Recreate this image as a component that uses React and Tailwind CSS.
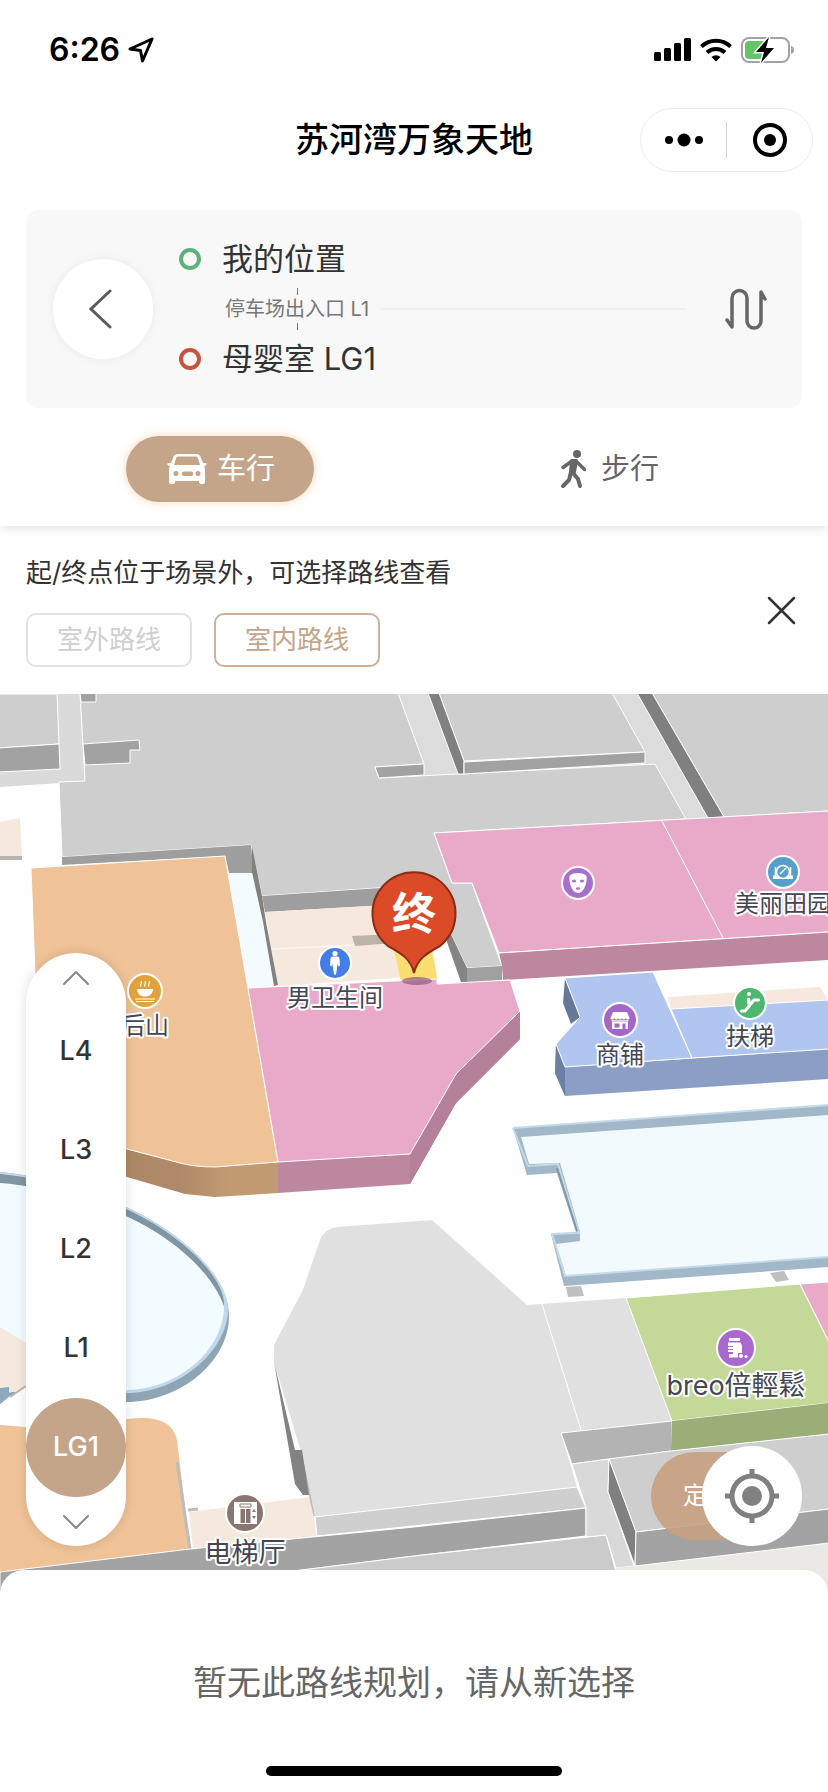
import { useState } from 'react';
import { ChevronUp, ChevronDown } from 'lucide-react';

const FLOORS = ['L4', 'L3', 'L2', 'L1', 'LG1'];

// one entry per place on the map, x / y is the centre of the round icon
const PLACES = [
  { id: 'cafe', name: '后山', x: 145, y: 991, r: 17, color: '#e2a23b', size: 24, labelY: 1034, icon: CafeIcon },
  { id: 'wc', name: '男卫生间', x: 335, y: 963, r: 16, color: '#437de8', size: 24, labelY: 1006, icon: ManIcon },
  { id: 'mask', name: '', x: 578, y: 883, r: 16, color: '#a86fc8', size: 24, labelY: 0, icon: MaskIcon },
  { id: 'spa', name: '美丽田园', x: 783, y: 872, r: 16, color: '#579fca', size: 24, labelY: 912, icon: MirrorIcon },
  { id: 'shop', name: '商铺', x: 620, y: 1020, r: 17, color: '#a566cc', size: 24, labelY: 1063, icon: ShopIcon },
  { id: 'escalator', name: '扶梯', x: 750, y: 1003, r: 16, color: '#4fb670', size: 24, labelY: 1045, icon: EscalatorIcon },
  { id: 'breo', name: 'breo倍輕鬆', x: 736, y: 1348, r: 19, color: '#a968cc', size: 27, labelY: 1395, icon: JarIcon },
  { id: 'lift', name: '电梯厅', x: 245, y: 1513, r: 19, color: '#8a7670', size: 27, labelY: 1562, icon: LiftIcon },
];

function CafeIcon() {
  return (
    <g fill="none" stroke="white" strokeWidth="1.2">
      <path d="M-8 -2H8C8 3 4 5.500 0 5.500S-8 3 -8 -2Z" fill="white" stroke="none" />
      <path d="M-4 -4.500c-2-2 2-3 0-5.500M0 -4.500c-2-2 2-3 0-5.500M4 -4.500c-2-2 2-3 0-5.500M-10 8H10M-9 10.500H9" />
    </g>
  );
}

function ManIcon() {
  return (
    <g fill="white">
      <circle cy="-9.500" r="2.600" />
      <path d="M-2.500 -6.500h5c1.500 0 1.800 1 2 2.500l.5 6.500-1.500 1-.8-3L2 5 1 11.500h-2L-2 5l-.7-4.500-.8 3-1.500-1 .5-6.500c.2-1.500.5-2.500 2-2.500Z" />
    </g>
  );
}

function MaskIcon() {
  return (
    <g>
      <path d="M-8.500 -7C-6 -11 6 -11 8.500 -7 9.500 -1 6 10 0 10S-9.500 -1 -8.500 -7Z" fill="white" />
      <ellipse cx="-4" cy="-2" rx="2" ry="1.500" fill="#a86fc8" />
      <ellipse cx="4" cy="-2" rx="2" ry="1.500" fill="#a86fc8" />
      <ellipse cy="5.500" rx="2.200" ry="1.200" fill="#a86fc8" />
    </g>
  );
}

function MirrorIcon() {
  return (
    <g fill="none" stroke="white" strokeWidth="1.500">
      <path d="M-7.500 -5V5M7.500 -5V5" />
      <path d="M-10 3.500H10V7H-10Z" fill="white" stroke="none" />
      <circle r="6.500" fill="#579fca" />
      <path d="M-3 2 3 -4" />
    </g>
  );
}

function ShopIcon() {
  return (
    <g>
      <path d="M-7 -8H7l2.500 6c0 2-3 2-3.800 0-.8 2-3 2-3.800 0-.8 2-3 2-3.800 0-.8 2-3 2-3.800 0-.8 2-3.800 2-3.800 0Z" fill="white" />
      <path d="M-8 1.500H8V9H-8Z" fill="white" />
      <path d="M-5.500 3.500H-.5V7.500H-5.500ZM2.500 3.500H5.500V9H2.500Z" fill="#a566cc" />
      <path d="M-8.500 .8H8.500" stroke="white" strokeWidth="1" />
    </g>
  );
}

function EscalatorIcon() {
  return (
    <g fill="none" stroke="white" strokeLinecap="round" strokeLinejoin="round">
      <path d="M-8.500 8H-5L4 -3H8.500" strokeWidth="3" />
      <path d="M-1.500 -3.500 -.5 2" strokeWidth="3.500" />
      <circle cx="-1" cy="-9" r="2" fill="white" stroke="none" />
    </g>
  );
}

function JarIcon() {
  return (
    <g>
      <path d="M-7 -10H4V-7H-7ZM-8 -5.500H4.500l1.500 3V5H2v4.500H-7V6H-3V4H-8Z" fill="white" />
      <path d="M-8 -1.500H-3M-8 1.500H-3" stroke="#a968cc" strokeWidth="1" />
      <circle cx="5" cy="8" r="2" fill="white" />
      <circle cx="10" cy="8.500" r="1.600" fill="white" />
    </g>
  );
}

function LiftIcon() {
  return (
    <g>
      <path d="M-11 -11H12V11H-11Z" fill="white" />
      <path d="M-5 -9H6V-6H-5Z" fill="none" stroke="#8a7670" />
      <path d="M-4.500 -4H0V10H-4.500ZM1 -4H5.500V10H1ZM9 -4l2 3H7ZM9 6 7 3h4Z" fill="#8a7670" />
    </g>
  );
}

function MallMap() {
  return (
    <svg
      className="absolute inset-0 h-full w-full"
      viewBox="0 694 828 900"
      preserveAspectRatio="xMidYMid slice"
      role="img"
      aria-label="LG1"
    >
      <defs>
        <linearGradient id="orangeSide" x1="0" x2="1">
          <stop offset="0.2" stopColor="#a98666" />
          <stop offset="0.6" stopColor="#b08a68" />
          <stop offset="0.8" stopColor="#c09b72" />
        </linearGradient>
      </defs>
      <rect y="694" width="828" height="900" fill="#fefefe" />

      {/* corridors and grey blocks at the top */}
      <g stroke="white" strokeWidth="1">
        <path d="M57 694H80L85 781 60 783 0 787V770L59 766Z" fill="#dadada" stroke="none" />
        <path d="M398 694H828V811L686 819 500 830 379 778Z" fill="#dcdcdc" stroke="none" />
        <path d="M-2 694H57L59 744 -2 748Z" fill="#cecece" />
        <path d="M-2 748 59 744 60 769 -2 772Z" fill="#a2a2a2" />
        <path d="M80 693H398L424 764 375 767 379 778 655 764 686 819 434 833 452 883H472L502 966 467 968 449 930 435 884 262 896 251 845 62 857 59 782 85 781Z" fill="#cecece" />
        <path d="M83 744 139 740 140 750H130V763L85 765Z" fill="#a2a2a2" />
        <path d="M80 693H96V702H81Z" fill="#a2a2a2" />
        <path d="M375 767 424 764V775L379 778Z" fill="#a2a2a2" />
        <path d="M439 693H612L645 752 464 761Z" fill="#cecece" />
        <path d="M428 693H439L464 761V774H458Z" fill="#808080" />
        <path d="M464 762 645 752V763L464 774Z" fill="#a2a2a2" />
        <path d="M652 693H829V811L724 817Z" fill="#cecece" />
        <path d="M637 693H652L724 817 708 818Z" fill="#808080" />
      </g>

      {/* walls and rooms behind the destination */}
      <path d="M0 822 20 818 22 857H0Z" fill="#f5e9de" />
      <path d="M0 856H22V860H0Z" fill="#b9b3b0" />
      <path d="M228 873H253L274 986 248 988Z" fill="#f3fbff" />
      <path d="M62 857 251 845 254 873H229L225 856 62 865Z" fill="#9e9e9e" />
      <path d="M262 896 440 884V902L265 912Z" fill="#9e9e9e" />
      <path d="M265 912 437 902V975L278 986Z" fill="#f5e9de" />
      <path d="M272 949 395 943" stroke="#fff6ea" strokeWidth="1.500" />
      <path d="M352 936 395 934V943L355 946Z" fill="#bdb2a8" />
      <path d="M394 950 431 948 438 980 401 981Z" fill="#fbdd70" />
      <path d="M252 846 262 896 266 922 278 985 274 986 263 922 252 872Z" fill="#82817d" />
      <path d="M430 930 449 932 467 984H438Z" fill="#fefefe" />
      <path d="M449 930 467 968V984L462 985 447 942Z" fill="#848484" />
      <path d="M467 968 502 966V981L467 983Z" fill="#a0a0a0" />

      {/* pink and orange shops */}
      <g stroke="white" strokeWidth="1">
        <path d="M434 833 829 811V932L499 953 472 883H452Z" fill="#e9aac9" />
        <path d="M499 953 829 932V960L503 980 502 966Z" fill="#bd879f" stroke="none" />
        <path d="M499 953 829 932M662 821 723 938" fill="none" />
        <path d="M36 1116 127 1149 180 1163 215 1167 278 1162V1193L215 1197 185 1194 127 1177 36 1150Z" fill="url(#orangeSide)" stroke="none" />
        <path d="M31 868 225 856 248 988 278 1162 215 1167Q195 1167 180 1163L127 1149 36 1116V1000Z" fill="#efc297" />
        <path d="M520 1011V1039L456 1103 410 1184 278 1193V1162L410 1154 456 1074Z" fill="#bd879f" stroke="none" />
        <path d="M456 1074 520 1011V1039L456 1103 410 1184V1154Z" fill="#b5809a" stroke="none" />
        <path d="M248 988 437 979V984L510 980 520 1011 456 1074 410 1154 278 1162Z" fill="#e9aac9" />
      </g>

      {/* blue shops */}
      <path d="M668 997 820 987 828 1000 671 1010Z" fill="#f6e8dc" />
      <path d="M565 978 580 1017 571 1024 563 1003Z" fill="#66799a" />
      <path d="M556 1044 565 1067 829 1049V1079L565 1096 555 1073Z" fill="#8b9ec3" />
      <path d="M556 1044 565 1067V1096L555 1073Z" fill="#6d80a4" />
      <g stroke="white" strokeWidth="1">
        <path d="M565 978 653 972 692 1058 565 1067 556 1044 580 1017Z" fill="#b0c6f0" />
        <path d="M671 1009 829 1000V1049L692 1058Z" fill="#b0c6f0" />
      </g>

      {/* glass roof on the right */}
      <path d="M513 1128 829 1105V1267L564 1286 551 1234 576 1232 557 1173 527 1175Z" fill="#a2b8c8" />
      <path d="M521 1137 829 1115V1257L566 1276 556 1244 580 1241V1232L560 1163 529 1164Z" fill="#f2fafd" />
      <path d="M513 1128 829 1105M513 1128 528 1166 558 1164 579 1233 552 1234 565 1276 829 1257" fill="none" stroke="#c3dae8" strokeWidth="2" />
      <path d="M557 1168 577 1231" stroke="#7f97aa" strokeWidth="2" />
      <path d="M566 1287 581 1286 584 1296 568 1297ZM770 1273 784 1271 789 1280 776 1282Z" fill="#c0bfc0" />

      {/* round glass roof on the left */}
      <path d="M0 1172C50 1177 90 1190 126 1207 190 1237 229 1280 229 1316 229 1362 180 1402 126 1402L20 1395 0 1404Z" fill="#8fa5b5" />
      <path d="M0 1172C50 1177 90 1190 126 1207 190 1237 228 1280 228 1309 228 1350 180 1393 126 1393L20 1388 0 1398Z" fill="#bfd9ea" />
      <path d="M0 1182C50 1186 90 1200 126 1216 180 1240 224 1285 224 1309 222 1350 180 1389 126 1390L20 1385 0 1394Z" fill="#f2fbff" />
      <path d="M0 1174C50 1179 90 1192 126 1209 185 1236 226 1280 224 1306 216 1284 190 1246 126 1216 90 1200 50 1187 0 1183Z" fill="#8195a3" />
      <path d="M0 1327 26 1343V1392H0Z" fill="#f5e9de" />
      <path d="M10 1396 26 1386 40 1410H0V1404Z" fill="#fefefe" />
      <path d="M0 1388 9 1387V1396L0 1404Z" fill="#8ea9bd" />
      <path d="M10 1397 26 1386" stroke="#bbb3ad" strokeWidth="2" />

      {/* bottom left orange shop and the lift hall */}
      <path d="M0 1425 26 1427 126 1419Q135 1418 143 1418 172 1418 177 1440L190 1549 0 1572Z" fill="#efc297" />
      <path d="M189 1512 310 1497 317 1536 193 1549Z" fill="#f5e9de" />
      <path d="M177 1462 190 1549M188 1510 198 1509M300 1450 315 1516" fill="none" stroke="#bcbcbc" strokeWidth="3" />

      {/* grey blocks at the bottom */}
      <g stroke="white" strokeWidth="1">
        <path d="M274 1345 303 1290 320 1240Q324 1229 337 1227L432 1220 527 1305 626 1298 672 1421 561 1433 577 1487 315 1517 304 1462 274 1362Z" fill="#e0e0e0" stroke="none" />
        <path d="M542 1304 581 1430" />
        <path d="M274 1362 295 1450H302L309 1495H303L295 1484Z" fill="#828282" stroke="none" />
        <path d="M315 1517 577 1487 586 1508 317 1536Z" fill="#cfcfcf" />
        <path d="M0 1572 190 1549 414 1527 586 1508V1536L414 1556 270 1574 0 1594Z" fill="#a3a3a3" />
        <path d="M270 1574 414 1556 606 1535 622 1594H200Z" fill="#cbcbcb" />
        <path d="M561 1433 672 1421V1451L572 1464Z" fill="#b3b3b3" />
        <path d="M572 1464 609 1459 608 1492 634 1566 616 1568 606 1535 586 1537V1508Z" fill="#d9d9d9" />
        <path d="M616 1568 828 1543V1594H622Z" fill="#ebe9e6" stroke="none" />
        <path d="M626 1298 800 1284 829 1342V1403L672 1421Z" fill="#c4d998" />
        <path d="M800 1284 829 1282V1342Z" fill="#e9aac9" />
        <path d="M672 1421 829 1403V1434L671 1451Z" fill="#9bae78" stroke="none" />
        <path d="M609 1459 671 1451 829 1434V1509L636 1532Z" fill="#cecece" />
        <path d="M609 1459 636 1532 635 1566 608 1492Z" fill="#808080" />
        <path d="M636 1532 829 1509V1543L635 1566Z" fill="#a3a3a3" />
      </g>

      {PLACES.map(({ id, name, x, y, r, color, size, labelY, icon: Icon }) => (
        <g key={id}>
          <circle cx={x} cy={y} r={r} fill={color} stroke="white" strokeWidth="2" />
          <g transform={`translate(${x} ${y})`}>
            <Icon />
          </g>
          {name && (
            <text
              x={x}
              y={labelY}
              fontSize={size}
              textAnchor="middle"
              fill="#434655"
              stroke="white"
              strokeWidth="4"
              strokeLinejoin="round"
              paintOrder="stroke"
            >
              {name}
            </text>
          )}
        </g>
      ))}

      {/* destination marker */}
      <ellipse cx="417" cy="981" rx="15" ry="4" fill="#8d5a80" opacity="0.7" />
      <path
        d="M414 973C411 960 403 954 388 946A41.500 41.500 0 1 1 440 946C425 954 417 960 414 973Z"
        fill="#dc4b28"
        stroke="#8d2c14"
        strokeWidth="2"
      />
      <text x="414" y="930" fontSize="44" fontWeight="700" textAnchor="middle" fill="white">
        终
      </text>
    </svg>
  );
}

function StatusBar() {
  return (
    <div className="flex h-[100px] items-center justify-between pr-8 pl-[49px]">
      <div className="flex items-center gap-2">
        <span className="text-[32px] leading-10 font-semibold">6:26</span>
        <svg className="h-7 w-7" viewBox="0 0 28 28" fill="none" stroke="black" strokeWidth="3" strokeLinejoin="round">
          <path d="M24 3 2 13 12.500 14.500 14.500 25Z" />
        </svg>
      </div>
      <div className="flex items-center gap-2">
        <svg className="h-6 w-[38px]" viewBox="0 0 38 24">
          <rect y="14" width="7" height="9" rx="1.500" />
          <rect x="10" y="10" width="7" height="13" rx="1.500" />
          <rect x="20" y="5" width="7" height="18" rx="1.500" />
          <rect x="30" y="0" width="7" height="23" rx="1.500" />
        </svg>
        <svg className="h-6 w-8" viewBox="0 0 32 24" fill="none" stroke="black" strokeWidth="4">
          <path d="M1.500 8.500a21 21 0 0 1 29 0M7 14.500a13 13 0 0 1 18 0" />
          <path d="M16 23.500 11.500 19a6.500 6.500 0 0 1 9 0Z" fill="black" stroke="none" />
        </svg>
        <svg className="h-7 w-14" viewBox="0 0 56 28">
          <rect x="2" y="2" width="47" height="24" rx="7" fill="none" stroke="#a3a3a3" strokeWidth="2" />
          <path d="M9 5H25V23H9a4 4 0 0 1-4-4V9a4 4 0 0 1 4-4Z" fill="#65c466" />
          <path d="M51 10c4 1 4 7 0 8Z" fill="#a3a3a3" />
          <path d="M29 1 16 16H24L21 27 34 12H26Z" stroke="white" strokeWidth="3" paintOrder="stroke" />
        </svg>
      </div>
    </div>
  );
}

function TitleBar() {
  return (
    <div className="grid h-20 grid-cols-[1fr_auto_1fr] items-center px-[15px]">
      <h1 className="col-start-2 text-[34px] leading-10 font-medium">苏河湾万象天地</h1>
      <div className="flex h-16 w-[173px] items-center justify-self-end rounded-full border border-[#ececec]">
        <button className="flex flex-1 items-center justify-center" aria-label="菜单">
          <svg className="h-4 w-10" viewBox="0 0 40 16">
            <circle cx="5" cy="8" r="4" />
            <circle cx="20" cy="8" r="6.500" />
            <circle cx="35" cy="8" r="4" />
          </svg>
        </button>
        <span className="h-9 w-px bg-[#d4d4d4]" />
        <button className="flex flex-1 items-center justify-center" aria-label="关闭">
          <svg className="h-9 w-9" viewBox="0 0 36 36">
            <circle cx="18" cy="18" r="15" fill="none" stroke="black" strokeWidth="4" />
            <circle cx="18" cy="18" r="6" />
          </svg>
        </button>
      </div>
    </div>
  );
}

function RouteCard() {
  return (
    <div className="mx-[26px] mt-[30px] flex h-[198px] items-center rounded-xl bg-[#f8f8f8] pr-8 pl-[27px]">
      <button
        className="flex h-[100px] w-[100px] items-center justify-center rounded-full bg-white shadow-[0_0_10px_rgba(0,0,0,0.06)]"
        aria-label="返回"
      >
        <svg className="h-11 w-7" viewBox="0 0 28 44" fill="none" stroke="#5c5c5c" strokeWidth="3" strokeLinecap="round">
          <path d="M21 4 2 22 21 40" />
        </svg>
      </button>
      <div className="ml-[26px] flex-1">
        <div className="flex h-[50px] items-center gap-[21px]">
          <span className="h-[22px] w-[22px] rounded-full border-4 border-[#5bb37a]" />
          <span className="text-[31px] text-[#333]">我的位置</span>
        </div>
        <div className="flex h-[50px] items-center gap-3 pl-[46px]">
          <span className="relative text-[20px] leading-5 text-[#777]">
            停车场出入口 L1
            <i className="absolute bottom-full left-1/2 mb-1 h-[7px] w-px bg-[#777]" />
            <i className="absolute top-full left-1/2 mt-1 h-[7px] w-px bg-[#777]" />
          </span>
          <span className="h-0.5 flex-1 bg-[#f1f1f1]" />
        </div>
        <div className="flex h-[50px] items-center gap-[21px]">
          <span className="h-[22px] w-[22px] rounded-full border-4 border-[#c6533a]" />
          <span className="text-[31px] text-[#333]">母婴室 LG1</span>
        </div>
      </div>
      <button className="ml-9" aria-label="交换起终点">
        <svg className="h-12 w-12" viewBox="0 0 48 48" fill="none" stroke="#666" strokeWidth="3.500" strokeLinecap="round" strokeLinejoin="round">
          <path d="M5 35 10 42V13a7.500 7.500 0 0 1 15 0V36a7 7 0 0 0 14 0V7L43 14" />
        </svg>
      </button>
    </div>
  );
}

function TravelTabs() {
  const [mode, setMode] = useState('car');
  const active = 'bg-[#c4a58a] text-white shadow-[0_0_10px_rgba(240,180,130,0.5)]';

  return (
    <div className="mt-7 grid grid-cols-2 px-[26px] pb-6">
      <button
        onClick={() => setMode('car')}
        className={`flex h-[66px] w-[188px] items-center justify-center gap-2 justify-self-center rounded-full text-[29px] ${
          mode === 'car' ? active : 'text-[#666]'
        }`}
      >
        <svg className="h-9 w-11" viewBox="0 0 44 36" fill="currentColor">
          <path
            fillRule="evenodd"
            d="M13 3H31C34 3 35 4 36 7L38 12H41C42 12 42 15 39 15 40 17 40 19 40 21V31C40 34 34 34 34 31V30H10V31C10 34 4 34 4 31V21C4 19 4 17 5 15 2 15 2 12 3 12H6L8 7C9 4 10 3 13 3ZM14 5.500C12 5.500 11.500 6 11 7.500L9 14H35L33 7.500C32.500 6 32 5.500 30 5.500ZM11 20a2.500 2.500 0 1 0 0 5 2.500 2.500 0 0 0 0-5ZM33 20a2.500 2.500 0 1 0 0 5 2.500 2.500 0 0 0 0-5ZM19 20.500a2 2 0 0 0 0 4.500H26a2 2 0 0 0 0-4.500Z"
          />
        </svg>
        车行
      </button>
      <button
        onClick={() => setMode('walk')}
        className={`flex h-[66px] w-[188px] items-center justify-center gap-3 justify-self-center rounded-full text-[29px] ${
          mode === 'walk' ? active : 'text-[#666]'
        }`}
      >
        <svg className="h-10 w-8" viewBox="0 0 32 40" fill="none" stroke="currentColor" strokeLinecap="round" strokeLinejoin="round">
          <circle cx="20" cy="5" r="4" fill="currentColor" stroke="none" />
          <path d="M15 12 6 18.500M19 12l3 3 5.500 5.500" strokeWidth="3.500" />
          <path d="M15 12h4l-2 11h-3Z" strokeWidth="4" fill="currentColor" />
          <path d="M14 23 12 31 6 37M16 24l5 6 2 7" strokeWidth="4" />
        </svg>
        步行
      </button>
    </div>
  );
}

function RouteNotice() {
  const [route, setRoute] = useState('indoor');
  const base = 'h-[54px] w-[166px] rounded-[10px] border-2 text-[26px] leading-8';
  const on = 'border-[#cdb09a] text-[#c4a58a]';
  const off = 'border-[#e2e2e2] text-[#cfcfcf]';

  return (
    <section className="flex items-center justify-between bg-white px-[26px] py-[27px]">
      <div>
        <p className="text-[26px] leading-10 text-[#333]">起/终点位于场景外，可选择路线查看</p>
        <div className="mt-5 flex gap-[22px]">
          <button onClick={() => setRoute('outdoor')} className={`${base} ${route === 'outdoor' ? on : off}`}>
            室外路线
          </button>
          <button onClick={() => setRoute('indoor')} className={`${base} ${route === 'indoor' ? on : off}`}>
            室内路线
          </button>
        </div>
      </div>
      <button aria-label="关闭提示">
        <svg className="h-10 w-10" viewBox="0 0 40 40" fill="none" stroke="#333" strokeWidth="2.500" strokeLinecap="round">
          <path d="M7 8 32 33M32 8 7 33" />
        </svg>
      </button>
    </section>
  );
}

function FloorPicker() {
  const [floor, setFloor] = useState('LG1');
  const index = FLOORS.indexOf(floor);

  return (
    <div className="absolute bottom-12 left-[26px] flex w-[100px] flex-col rounded-full bg-white shadow-[0_0_12px_rgba(0,0,0,0.12)]">
      <button
        className="flex h-[49px] items-center justify-center"
        aria-label="上一层"
        onClick={() => setFloor(FLOORS[Math.max(index - 1, 0)])}
      >
        <ChevronUp className="h-12 w-12 text-[#888]" strokeWidth={1} />
      </button>
      {FLOORS.map((name) => (
        <button
          key={name}
          onClick={() => setFloor(name)}
          className={`h-[99px] rounded-full text-[27px] font-medium ${
            name === floor ? 'bg-[#c4a58a] text-white' : 'text-[#333]'
          }`}
        >
          {name}
        </button>
      ))}
      <button
        className="flex h-[49px] items-center justify-center"
        aria-label="下一层"
        onClick={() => setFloor(FLOORS[Math.min(index + 1, FLOORS.length - 1)])}
      >
        <ChevronDown className="h-12 w-12 text-[#888]" strokeWidth={1} />
      </button>
    </div>
  );
}

function LocateButton() {
  return (
    <button className="absolute right-[26px] bottom-12 flex items-center" aria-label="定位">
      <span className="-mr-[50px] flex h-[88px] w-[101px] items-center overflow-hidden rounded-l-full bg-[#c8a182]/90 pl-8 text-[24px] whitespace-nowrap text-white">
        定位
      </span>
      <span className="relative flex h-[100px] w-[100px] items-center justify-center rounded-full bg-white">
        <svg className="h-14 w-14" viewBox="0 0 56 56" fill="none" stroke="#808080" strokeWidth="5">
          <circle cx="28" cy="28" r="20" />
          <path d="M28 1V8M28 48v7M1 28H8M48 28h7" />
          <circle cx="28" cy="28" r="10" fill="#808080" stroke="none" />
        </svg>
      </span>
    </button>
  );
}

export default function App() {
  return (
    <div className="flex min-h-screen flex-col bg-white font-['Inter','Noto_Sans_CJK_SC',sans-serif] text-black">
      <header className="relative z-10 bg-white shadow-[0_2px_10px_rgba(0,0,0,0.12)]">
        <StatusBar />
        <TitleBar />
        <RouteCard />
        <TravelTabs />
      </header>
      <RouteNotice />
      <main className="relative min-h-[700px] flex-1 overflow-hidden">
        <MallMap />
        <FloorPicker />
        <LocateButton />
      </main>
      <footer className="relative -mt-6 flex h-[222px] flex-col items-center justify-between rounded-t-3xl bg-white pt-[90px] pb-4">
        <p className="text-[34px] leading-[46px] text-[#666]">暂无此路线规划，请从新选择</p>
        <span className="h-2.5 w-[296px] rounded-full bg-black" />
      </footer>
    </div>
  );
}
